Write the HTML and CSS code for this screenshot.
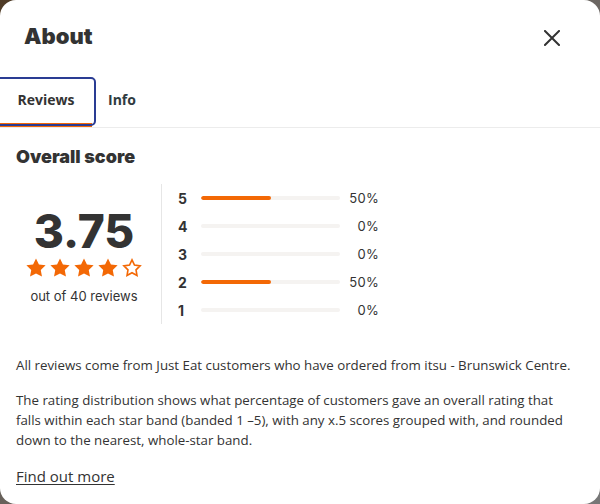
FILE: index.html
```html
<!DOCTYPE html>
<html lang="en">
<head>
<meta charset="utf-8">
<title>About</title>
<link rel="stylesheet" href="styles.css">
</head>
<body>
<div class="modal">
  <header class="header">
    <h1 class="title">About</h1>
    <button class="close" aria-label="Close">
      <svg width="16" height="16" viewBox="0 0 16 16"><path d="M1 1L15 15M15 1L1 15" stroke="#333" stroke-width="2" fill="none" stroke-linecap="square"/></svg>
    </button>
  </header>
  <nav class="tabs">
    <button class="tab active">Reviews</button>
    <button class="tab">Info</button>
  </nav>
  <section class="content">
    <h2 class="subtitle">Overall score</h2>
    <div class="score">
      <div class="summary">
        <div class="value">3.75</div>
        <div class="stars">
          <svg class="star" viewBox="0 0 24 24"><path d="M12 1.5l3.2 6.6 7.3 1-5.3 5.1 1.3 7.2L12 18l-6.5 3.4 1.3-7.2L1.5 9.1l7.3-1z" fill="#f36805"/></svg>
          <svg class="star" viewBox="0 0 24 24"><path d="M12 1.5l3.2 6.6 7.3 1-5.3 5.1 1.3 7.2L12 18l-6.5 3.4 1.3-7.2L1.5 9.1l7.3-1z" fill="#f36805"/></svg>
          <svg class="star" viewBox="0 0 24 24"><path d="M12 1.5l3.2 6.6 7.3 1-5.3 5.1 1.3 7.2L12 18l-6.5 3.4 1.3-7.2L1.5 9.1l7.3-1z" fill="#f36805"/></svg>
          <svg class="star" viewBox="0 0 24 24"><path d="M12 1.5l3.2 6.6 7.3 1-5.3 5.1 1.3 7.2L12 18l-6.5 3.4 1.3-7.2L1.5 9.1l7.3-1z" fill="#f36805"/></svg>
          <svg class="star" viewBox="0 0 24 24"><path d="M12 3.2l2.7 5.6 6.1.9-4.4 4.3 1 6.1L12 17.2l-5.4 2.9 1-6.1-4.4-4.3 6.1-.9z" fill="none" stroke="#f36805" stroke-width="1.8" stroke-linejoin="miter"/></svg>
        </div>
        <div class="count">out of 40 reviews</div>
      </div>
      <div class="bars">
        <div class="row"><span class="label">5</span><span class="track"><span class="fill" style="width:50%"></span></span><span class="pct">50%</span></div>
        <div class="row"><span class="label">4</span><span class="track"><span class="fill" style="width:0%"></span></span><span class="pct">0%</span></div>
        <div class="row"><span class="label">3</span><span class="track"><span class="fill" style="width:0%"></span></span><span class="pct">0%</span></div>
        <div class="row"><span class="label">2</span><span class="track"><span class="fill" style="width:50%"></span></span><span class="pct">50%</span></div>
        <div class="row"><span class="label">1</span><span class="track"><span class="fill" style="width:0%"></span></span><span class="pct">0%</span></div>
      </div>
    </div>
    <p class="text">All reviews come from Just Eat customers who have ordered from itsu - Brunswick Centre.</p>
    <p class="text">The rating distribution shows what percentage of customers gave an overall rating that falls within each star band (banded 1 –5), with any x.5 scores grouped with, and rounded down to the nearest, whole-star band.</p>
    <a class="more" href="#">Find out more</a>
  </section>
</div>
</body>
</html>
```

FILE: styles.css
```css
* { box-sizing: border-box; }
html, body { margin: 0; padding: 0; }
body {
  width: 600px;
  height: 504px;
  background: linear-gradient(135deg, #4f3b26 0%, #6a6560 50%, #777 100%);
  overflow: hidden;
}
.modal {
  width: 600px;
  height: 504px;
  background: #fff;
  border-radius: 16px;
  color: #333;
  font-family: "Open Sans", "Noto Sans", sans-serif;
}
.header {
  display: flex;
  justify-content: space-between;
  align-items: flex-start;
  padding: 20px 32px 0 24px;
  height: 77px;
}
.title {
  margin: 0;
  font-family: Inter, sans-serif;
  font-weight: 900;
  font-size: 22px;
  line-height: 32px;
  color: #333;
}
.close {
  width: 32px;
  height: 32px;
  border: 0;
  background: none;
  padding: 0;
  margin-top: 2px;
  display: flex;
  align-items: center;
  justify-content: center;
}
.tabs {
  display: flex;
  border-bottom: 1px solid #ececec;
  height: 51px;
}
.tab {
  position: relative;
  border: 0;
  background: none;
  font-family: "Open Sans", sans-serif;
  font-weight: 700;
  font-size: 14px;
  color: #333;
  height: 50px;
  line-height: 46px;
}
.tab:not(.active) { padding: 0 0 4px 16px; color: #2f3b40; }
.tab.active {
  width: 92px;
  padding: 0;
  border-bottom: 4px solid #f36805;
}
.tab.active::after {
  content: "";
  position: absolute;
  left: -4px;
  right: -4px;
  top: 0;
  height: 45px;
  border: 2px solid #2a3c93;
  border-radius: 5px;
}
.content {
  padding: 17px 16px 0 16px;
}
.subtitle {
  margin: 0;
  font-family: Inter, sans-serif;
  font-weight: 900;
  font-size: 18px;
  line-height: 24px;
  color: #333;
}
.score {
  display: flex;
  margin-top: 13px;
  align-items: center;
}
.summary {
  width: 136px;
  margin-right: 9px;
  display: flex;
  flex-direction: column;
  align-items: center;
  padding-top: 8px;
}
.value {
  font-family: Inter, sans-serif;
  font-weight: 800;
  font-size: 46px;
  line-height: 44px;
  color: #333;
}
.stars {
  display: flex;
  gap: 2px;
  margin-top: 4px;
}
.star { width: 22px; height: 22px; display: block; }
.count {
  font-family: Inter, sans-serif;
  font-size: 13px;
  line-height: 18px;
  margin-top: 8px;
  color: #333;
}
.bars {
  border-left: 1px solid #e6e6e6;
  padding-left: 16px;
  height: 140px;
  margin-top: 2px;
  display: flex;
  flex-direction: column;
}
.row {
  height: 28px;
  display: flex;
  align-items: center;
}
.label {
  width: 23px;
  font-family: Inter, sans-serif;
  font-weight: 700;
  font-size: 14px;
  color: #333;
}
.track {
  width: 139px;
  height: 4px;
  border-radius: 2px;
  background: #f5f3f1;
  overflow: hidden;
  display: block;
}
.fill {
  display: block;
  height: 100%;
  background: #f36805;
  border-radius: 2px;
}
.pct {
  width: 39px;
  text-align: right;
  font-family: Inter, sans-serif;
  font-size: 13px;
  color: #333;
  letter-spacing: 0.3px;
}
.text {
  margin: 31px 0 15px;
  max-width: 560px;
  font-size: 13.3px;
  line-height: 20px;
  color: #333;
}
.text + .text { margin-top: 0; }
.more {
  display: inline-block;
  margin-top: -3px;
  font-size: 15px;
  line-height: 20px;
  color: #333;
  text-decoration: underline;
  text-underline-offset: 2px;
}
```
